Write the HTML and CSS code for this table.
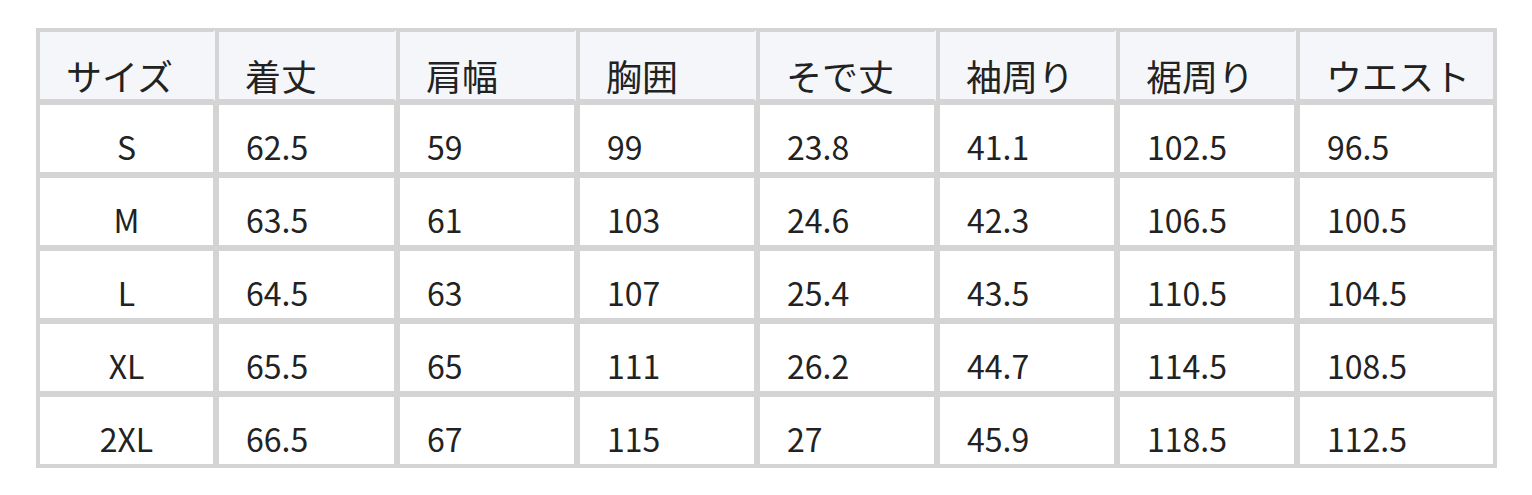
FILE: index.html
```html
<!DOCTYPE html>
<html lang="ja">
<head>
<meta charset="utf-8">
<title>サイズ表</title>
<link rel="stylesheet" href="styles.css">
</head>
<body>
<table class="size-table">
  <thead>
    <tr>
      <th class="c1">サイズ</th>
      <th class="c2">着丈</th>
      <th class="c3">肩幅</th>
      <th class="c4">胸囲</th>
      <th class="c5">そで丈</th>
      <th class="c6">袖周り</th>
      <th class="c7">裾周り</th>
      <th class="c8">ウエスト</th>
    </tr>
  </thead>
  <tbody>
    <tr><td class="size">S</td><td>62.5</td><td>59</td><td>99</td><td>23.8</td><td>41.1</td><td>102.5</td><td>96.5</td></tr>
    <tr><td class="size">M</td><td>63.5</td><td>61</td><td>103</td><td>24.6</td><td>42.3</td><td>106.5</td><td>100.5</td></tr>
    <tr><td class="size">L</td><td>64.5</td><td>63</td><td>107</td><td>25.4</td><td>43.5</td><td>110.5</td><td>104.5</td></tr>
    <tr><td class="size">XL</td><td>65.5</td><td>65</td><td>111</td><td>26.2</td><td>44.7</td><td>114.5</td><td>108.5</td></tr>
    <tr><td class="size">2XL</td><td>66.5</td><td>67</td><td>115</td><td>27</td><td>45.9</td><td>118.5</td><td>112.5</td></tr>
  </tbody>
</table>
</body>
</html>
```
FILE: styles.css
```css
html, body {
  margin: 0;
  padding: 0;
  background: #ffffff;
}

body {
  font-family: "Noto Sans CJK JP", "Noto Sans", sans-serif;
  color: #222222;
}

.size-table {
  margin: 28px 0 0 36px;
  border-collapse: separate;
  border-spacing: 2px;
  background: #d4d4d4;
  table-layout: fixed;
  width: 1461px;
}

.size-table th,
.size-table td {
  box-sizing: border-box;
  height: 71px;
  border: 2px solid #d4d4d4;
  padding: 14px 0 0 27px;
  font-size: 32px;
  font-weight: 400;
  line-height: 40px;
  text-align: left;
  vertical-align: middle;
  white-space: nowrap;
}

.size-table th {
  background: #f4f6fa;
  border-right-color: #f4f6fa;
  font-size: 36px;
  padding-top: 18px;
  padding-left: 26px;
}

.size-table th:last-child {
  border-right-color: #d4d4d4;
}

.size-table td {
  background: #ffffff;
}

.size-table td.size {
  text-align: center;
  padding-left: 0;
}

.c1 { width: 177px; }
.c2 { width: 179px; }
.c3, .c4, .c5, .c6, .c7 { width: 178px; }
.c8 { width: 197px; }
```
